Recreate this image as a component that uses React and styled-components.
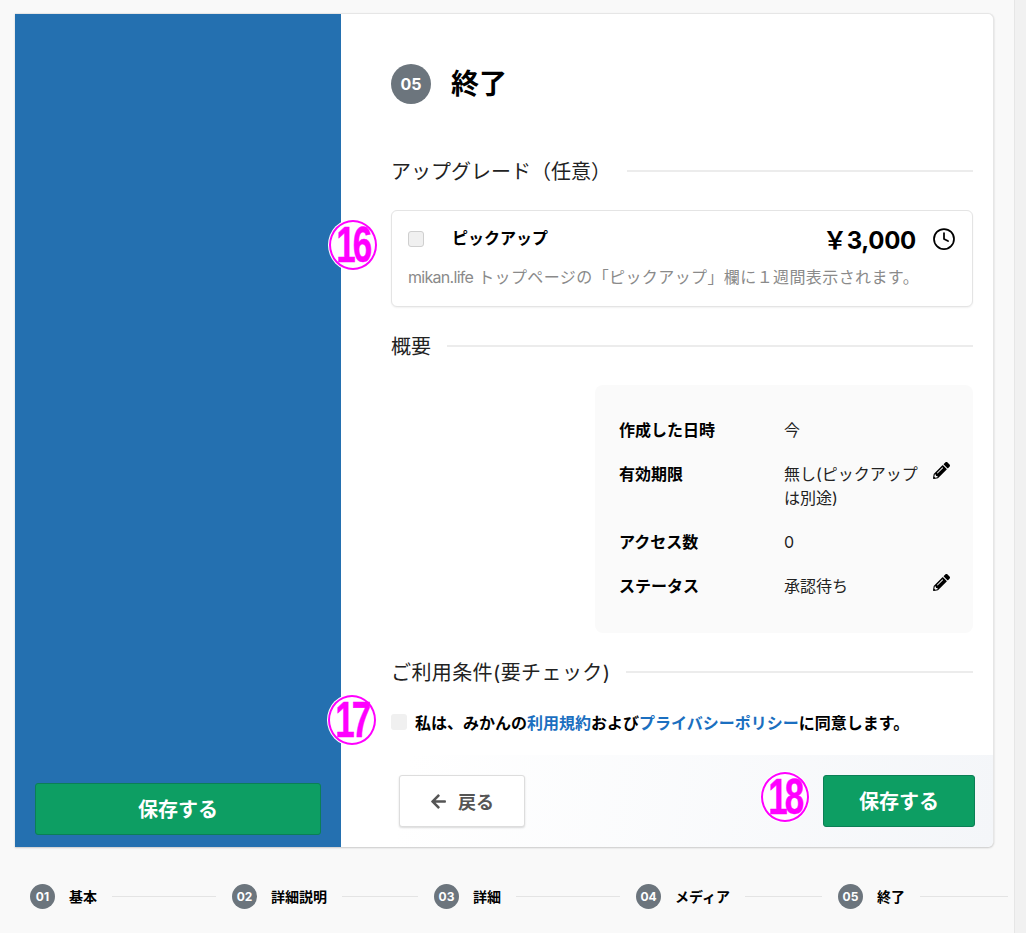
import React from 'react';
import styled, { createGlobalStyle } from 'styled-components';
import { Clock } from 'lucide-react';
import { FaArrowLeft, FaPencilAlt } from 'react-icons/fa';

const GlobalStyle = createGlobalStyle`
    html, body {
        margin: 0;
        padding: 0;
        height: 100%;
        overflow: hidden;
    }
    * {
        box-sizing: border-box;
    }
    body {
        font-family: Inter, "Noto Sans CJK JP", sans-serif;
        color: #111;
    }
`;

const Page = styled.div`
    display: flex;
    height: 933px;
    background: #f9f9f9;
`;

const Main = styled.main`
    flex: 1;
    min-width: 0;
    padding: 13px 6px 0 15px;
`;

const Scrollbar = styled.div`
    width: 12px;
    background: #f1f1f1;
    border-left: 1px solid #e6e6e6;
`;

const Card = styled.div`
    display: flex;
    height: 834px;
    width: 979px;
    background: #fff;
    border-top: 1px solid #e6e6e6;
    border-right: 1px solid #e6e6e6;
    border-radius: 0 6px 6px 0;
    box-shadow: 0 1px 2px rgba(0, 0, 0, 0.2);
`;

const SidePanel = styled.aside`
    flex: 0 0 326px;
    display: flex;
    flex-direction: column;
    justify-content: flex-end;
    padding: 0 20px 12px;
    background: #2470b0;
`;

const ContentPanel = styled.section`
    flex: 1;
    min-width: 0;
    display: flex;
    flex-direction: column;
`;

const ContentBody = styled.div`
    flex: 1;
    padding: 50px 20px 0 50px;
`;

const TitleRow = styled.div`
    display: flex;
    align-items: center;
    gap: 20px;
    height: 40px;
`;

const NumberCircle = styled.span`
    display: flex;
    align-items: center;
    justify-content: center;
    flex: none;
    width: ${props => props.size}px;
    height: ${props => props.size}px;
    border-radius: 50%;
    background: #6c757d;
    color: #fff;
    font-size: ${props => props.fontSize}px;
    font-weight: 700;
`;

const Title = styled.h1`
    margin: 0;
    font-size: 28px;
    font-weight: 700;
    line-height: 40px;
    color: #000;
`;

const SectionHeading = styled.div`
    display: flex;
    align-items: center;
    height: 30px;
    margin: ${props => props.margin};
    font-size: 20px;
    font-weight: 400;
    color: #222;
    white-space: nowrap;

    span {
        display: block;
        margin-top: -2px;
        letter-spacing: ${props => props.spacing || 0}px;
    }

    &::after {
        content: '';
        flex: 1;
        height: 2px;
        margin-left: 16px;
        background: #ececec;
    }
`;

const UpgradeCard = styled.div`
    position: relative;
    height: 97px;
    margin-top: 24px;
    padding: 0 16px;
    background: #fff;
    border: 1px solid #e4e4e4;
    border-radius: 6px;
    box-shadow: 0 1px 2px rgba(0, 0, 0, 0.06);
`;

const UpgradeTop = styled.div`
    display: flex;
    align-items: center;
    height: 55px;
`;

const Checkbox = styled.span`
    flex: none;
    display: block;
    width: 16px;
    height: 16px;
    background: #f0f0f0;
    border: ${props => (props.plain ? 'none' : '1px solid #cfcfcf')};
    border-radius: 3px;
`;

const UpgradeName = styled.span`
    margin-top: -3px;
    margin-left: 28px;
    font-size: 16px;
    font-weight: 700;
    color: #000;
`;

const Price = styled.span`
    margin-left: auto;
    font-size: 24px;
    font-weight: 700;
    letter-spacing: -0.3px;
    color: #000;
`;

const ClockIcon = styled(Clock)`
    flex: none;
    margin-left: 16px;
    color: #000;
`;

const UpgradeText = styled.p`
    margin: -1px 0 0;
    font-size: 16px;
    line-height: 24px;
    letter-spacing: 0.4px;
    color: #8a8a8a;
    text-spacing-trim: space-all;
`;

const SiteName = styled.span`
    letter-spacing: -0.7px;
`;

const SummaryBox = styled.div`
    display: flex;
    flex-direction: column;
    gap: 20px;
    width: 378px;
    margin: 24px 0 0 auto;
    padding: 33px 23px 35px 24px;
    background: #fafafa;
    border-radius: 8px;
`;

const SummaryRow = styled.div`
    display: grid;
    grid-template-columns: 165px 1fr 17px;
    font-size: 16px;
    line-height: 24px;
`;

const SummaryLabel = styled.span`
    font-weight: 700;
    color: #000;
`;

const SummaryValue = styled.span`
    padding-right: 10px;
    color: #222;
`;

const EditIcon = styled(FaPencilAlt)`
    width: 17px;
    height: 17px;
    color: #000;
`;

const TermsRow = styled.div`
    position: relative;
    display: flex;
    align-items: center;
    gap: 8px;
    height: 24px;
    margin-top: 23px;
    font-size: 16px;
    font-weight: 700;
    color: #000;
`;

const TermsLink = styled.a`
    color: #1b6fc0;
`;

const Footer = styled.div`
    position: relative;
    display: flex;
    align-items: flex-start;
    justify-content: space-between;
    height: 92px;
    padding: 20px 18px 0 58px;
    background: linear-gradient(100deg, #fff 10%, #f4f6f9 100%);
    border-radius: 0 0 6px 0;
`;

const BackButton = styled.button`
    display: flex;
    align-items: center;
    justify-content: center;
    gap: 11px;
    width: 126px;
    height: 52px;
    background: #fff;
    border: 1px solid #ddd;
    border-radius: 3px;
    box-shadow: 0 1px 2px rgba(0, 0, 0, 0.15);
    font-family: inherit;
    font-size: 18px;
    font-weight: 700;
    color: #555;
`;

const SaveButton = styled.button`
    display: block;
    width: ${props => props.width};
    height: 52px;
    padding-bottom: 3px;
    background: #0d9e63;
    border: 1px solid #0b7f56;
    border-radius: 3px;
    font-family: inherit;
    font-size: 20px;
    font-weight: 700;
    color: #fff;
`;

const Badge = styled.span`
    position: absolute;
    left: ${props => props.left}px;
    top: ${props => props.top}px;
    display: flex;
    align-items: center;
    justify-content: center;
    width: 48px;
    height: 50px;
    background: #fff;
    border: 2px solid #f0f;
    border-radius: 50%;
    box-shadow: 0 0 0 1px #fff;
    font-family: "Liberation Sans", sans-serif;
    font-size: 50px;
    font-weight: 700;
    color: #f0f;

    span {
        display: block;
        letter-spacing: -4px;
        transform: scaleX(0.7);
        -webkit-text-stroke: 0.5px #f0f;
    }
`;

const Steps = styled.nav`
    display: flex;
    align-items: center;
    height: 25px;
    margin-top: 37px;
    padding-left: 15px;
`;

const Step = styled.div`
    display: flex;
    align-items: center;
    flex: 0 0 202px;
    padding-right: 16px;

    &:last-child {
        flex-basis: 170px;
        padding-right: 0;
    }

    &::after {
        content: '';
        flex: 1;
        height: 1px;
        margin-left: 15px;
        background: #e4e4e4;
    }
`;

const StepLabel = styled.span`
    margin: -2px 0 0 14px;
    font-size: 14px;
    font-weight: 700;
    color: #000;
    white-space: nowrap;
`;

const steps = ['基本', '詳細説明', '詳細', 'メディア', '終了'];

const summary = [
    { label: '作成した日時', value: '今' },
    { label: '有効期限', value: '無し(ピックアップは別途)', editable: true },
    { label: 'アクセス数', value: '0' },
    { label: 'ステータス', value: '承認待ち', editable: true },
];

const App = () => (
    <Page>
        <GlobalStyle />
        <Main>
            <Card>
                <SidePanel>
                    <SaveButton width="100%">保存する</SaveButton>
                </SidePanel>
                <ContentPanel>
                    <ContentBody>
                        <TitleRow>
                            <NumberCircle size={40} fontSize={16}>05</NumberCircle>
                            <Title>終了</Title>
                        </TitleRow>

                        <SectionHeading margin="52px 0 0"><span>アップグレード（任意）</span></SectionHeading>
                        <UpgradeCard>
                            <Badge left={-63} top={9}><span>16</span></Badge>
                            <UpgradeTop>
                                <Checkbox />
                                <UpgradeName>ピックアップ</UpgradeName>
                                <Price>￥3,000</Price>
                                <ClockIcon size={24} strokeWidth={1.75} />
                            </UpgradeTop>
                            <UpgradeText><SiteName>mikan.life</SiteName> トップページの「ピックアップ」欄に１週間表示されます。</UpgradeText>
                        </UpgradeCard>

                        <SectionHeading margin="24px 0 0"><span>概要</span></SectionHeading>
                        <SummaryBox>
                            {summary.map(row => (
                                <SummaryRow key={row.label}>
                                    <SummaryLabel>{row.label}</SummaryLabel>
                                    <SummaryValue>{row.value}</SummaryValue>
                                    {row.editable && <EditIcon />}
                                </SummaryRow>
                            ))}
                        </SummaryBox>

                        <SectionHeading margin="24px 0 0" spacing={0.4}><span>ご利用条件(要チェック)</span></SectionHeading>
                        <TermsRow>
                            <Badge left={-63} top={-15}><span>17</span></Badge>
                            <Checkbox plain />
                            <span>
                                私は、みかんの<TermsLink>利用規約</TermsLink>および<TermsLink>プライバシーポリシー</TermsLink>に同意します。
                            </span>
                        </TermsRow>
                    </ContentBody>
                    <Footer>
                        <BackButton><FaArrowLeft size={17} />戻る</BackButton>
                        <Badge left={420} top={17}><span>18</span></Badge>
                        <SaveButton width="152px">保存する</SaveButton>
                    </Footer>
                </ContentPanel>
            </Card>
            <Steps>
                {steps.map((step, i) => (
                    <Step key={step}>
                        <NumberCircle size={25} fontSize={12}>0{i + 1}</NumberCircle>
                        <StepLabel>{step}</StepLabel>
                    </Step>
                ))}
            </Steps>
        </Main>
        <Scrollbar />
    </Page>
);

export default App;
